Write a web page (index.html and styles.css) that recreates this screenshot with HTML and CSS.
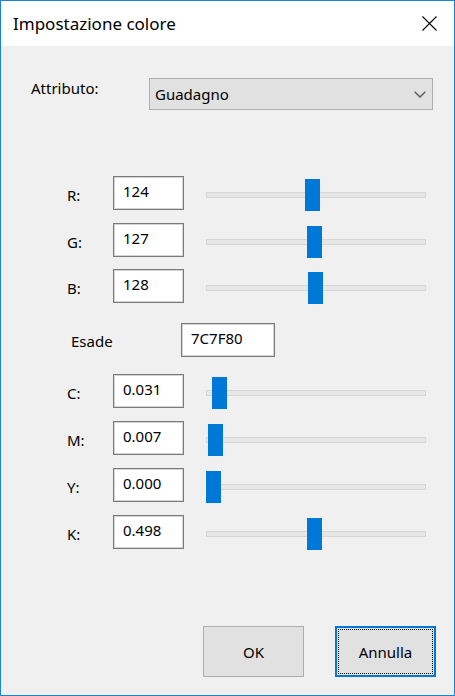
FILE: index.html
```html
<!DOCTYPE html>
<html lang="it">
<head>
<meta charset="utf-8">
<title>Impostazione colore</title>
<link rel="stylesheet" href="styles.css">
</head>
<body>
<div class="window">
  <div class="titlebar">
    <span class="title">Impostazione colore</span>
    <span class="close">
      <svg width="15" height="15" viewBox="0 0 15 15"><path d="M0.5 0.5 L14.5 14.5 M14.5 0.5 L0.5 14.5" stroke="#000" stroke-width="1.1" fill="none"/></svg>
    </span>
  </div>
  <div class="content">
    <div class="attr-row">
      <span class="attr-label">Attributo:</span>
      <div class="combo">
        <span class="combo-text">Guadagno</span>
        <svg class="chevron" width="12" height="7" viewBox="0 0 12 7"><path d="M0.7 0.7 L6 6 L11.3 0.7" stroke="#606060" stroke-width="1.5" fill="none"/></svg>
      </div>
    </div>

    <div class="group rgb">
      <div class="row">
        <span class="row-label">R:</span>
        <div class="textbox">124</div>
        <div class="slider"><div class="track"></div><div class="thumb" style="left:99px"></div></div>
      </div>
      <div class="row">
        <span class="row-label">G:</span>
        <div class="textbox">127</div>
        <div class="slider"><div class="track"></div><div class="thumb" style="left:101px"></div></div>
      </div>
      <div class="row">
        <span class="row-label">B:</span>
        <div class="textbox">128</div>
        <div class="slider"><div class="track"></div><div class="thumb" style="left:102px"></div></div>
      </div>
    </div>

    <div class="hex-row">
      <span class="hex-label">Esade</span>
      <div class="textbox hex-box">7C7F80</div>
    </div>

    <div class="group cmyk">
      <div class="row">
        <span class="row-label">C:</span>
        <div class="textbox">0.031</div>
        <div class="slider"><div class="track"></div><div class="thumb" style="left:6px"></div></div>
      </div>
      <div class="row">
        <span class="row-label">M:</span>
        <div class="textbox">0.007</div>
        <div class="slider"><div class="track"></div><div class="thumb" style="left:2px"></div></div>
      </div>
      <div class="row">
        <span class="row-label">Y:</span>
        <div class="textbox">0.000</div>
        <div class="slider"><div class="track"></div><div class="thumb" style="left:0px"></div></div>
      </div>
      <div class="row">
        <span class="row-label">K:</span>
        <div class="textbox">0.498</div>
        <div class="slider"><div class="track"></div><div class="thumb" style="left:101px"></div></div>
      </div>
    </div>

    <div class="buttons">
      <div class="button">OK</div>
      <div class="button default"><span class="focus">Annulla</span></div>
    </div>
  </div>
</div>
</body>
</html>
```

FILE: styles.css
```css
* { box-sizing: border-box; }

html, body {
  margin: 0;
  padding: 0;
  background: #f0f0f0;
}

body {
  font-family: "Noto Sans", sans-serif;
  font-size: 15px;
  line-height: 20px;
  color: #000;
}

.window {
  width: 455px;
  height: 696px;
  border: 1px solid #1883d7;
  display: flex;
  flex-direction: column;
  overflow: hidden;
}

.titlebar {
  height: 45px;
  flex: none;
  background: #fff;
  display: flex;
  align-items: center;
  padding-left: 12px;
  padding-right: 17px;
}

.title {
  font-size: 17px;
  line-height: 24px;
  flex: 1;
}

.close {
  display: flex;
  width: 15px;
  height: 15px;
}

.content {
  flex: 1;
  background: #f0f0f0;
  display: flex;
  flex-direction: column;
  padding: 32px 18px 18px 30px;
}

.attr-row {
  display: flex;
  align-items: flex-start;
}

.attr-label {
  width: 118px;
}

.combo {
  width: 284px;
  height: 32px;
  background: #e1e1e1;
  border: 1px solid #adadad;
  display: flex;
  align-items: center;
  padding: 0 6px 0 5px;
}

.combo-text { flex: 1; }

.chevron { display: block; }

.group {
  display: flex;
  flex-direction: column;
}

.rgb {
  margin-top: 66px;
  gap: 12.5px;
}

.cmyk {
  margin-top: 17px;
  gap: 13px;
}

.row {
  display: flex;
  align-items: flex-start;
  padding-left: 36px;
  height: 34px;
}

.row-label {
  width: 46px;
  margin-top: 9px;
}

.textbox {
  width: 71px;
  height: 34px;
  background: #fff;
  border: 1px solid #7a7a7a;
  box-shadow: inset 0 0 0 1px #d4d4d4;
  padding: 4px 9px 0;
  line-height: 20px;
}

.slider {
  position: relative;
  width: 220px;
  height: 32px;
  margin-left: 22px;
  margin-top: 3px;
}

.track {
  position: absolute;
  left: 0;
  right: 0;
  top: 13px;
  height: 6px;
  background: #e7e7e7;
  border: 1px solid #d6d6d6;
}

.thumb {
  position: absolute;
  top: 0;
  width: 15px;
  height: 32px;
  background: #0078d7;
}

.hex-row {
  display: flex;
  align-items: flex-start;
  margin-top: 20px;
  padding-left: 40px;
  height: 34px;
}

.hex-label {
  width: 110px;
  margin-top: 8px;
}

.hex-box {
  width: 94px;
}

.buttons {
  margin-top: auto;
  display: flex;
  justify-content: flex-end;
  gap: 31px;
}

.button {
  width: 101px;
  height: 51px;
  background: #e1e1e1;
  border: 1px solid #adadad;
  display: flex;
  align-items: center;
  justify-content: center;
}

.button.default {
  border: 2px solid #0078d7;
  padding: 1px;
}

.focus {
  flex: 1;
  align-self: stretch;
  display: flex;
  align-items: center;
  justify-content: center;
  border: 1px dotted #000;
}
```
